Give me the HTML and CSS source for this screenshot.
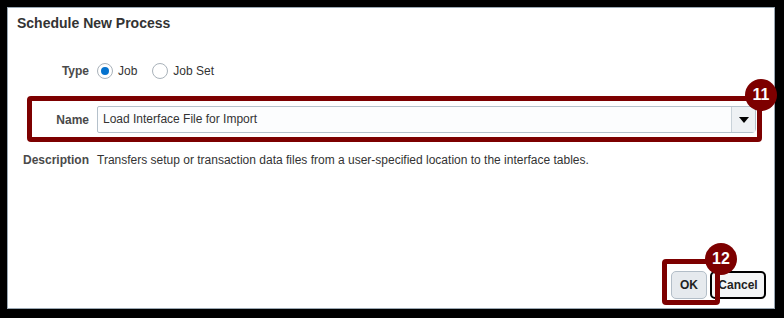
FILE: index.html
```html
<!DOCTYPE html>
<html lang="en">
<head>
  <meta charset="UTF-8">
  <title>Schedule New Process</title>
  <link rel="stylesheet" href="styles.css">
</head>
<body>
<div class="screen">
  <div class="dialog">
    <h1 class="title">Schedule New Process</h1>

    <div class="row row-type">
      <span class="label">Type</span>
      <span class="radio checked"></span><span class="radio-text">Job</span>
      <span class="radio"></span><span class="radio-text">Job Set</span>
    </div>

    <div class="row row-name">
      <span class="label">Name</span>
      <div class="select">
        <span class="select-value">Load Interface File for Import</span>
        <span class="select-btn"><span class="caret"></span></span>
      </div>
    </div>

    <div class="row row-desc">
      <span class="label">Description</span>
      <span class="desc">Transfers setup or transaction data files from a user-specified location to the interface tables.</span>
    </div>

    <div class="footer">
      <button class="btn btn-ok">OK</button>
      <button class="btn btn-cancel">Cancel</button>
    </div>
  </div>

  <!-- tutorial callouts -->
  <div class="hilite hilite-name"></div>
  <div class="badge badge-11">11</div>
  <div class="hilite hilite-ok"></div>
  <div class="badge badge-12">12</div>
</div>
</body>
</html>
```

FILE: styles.css
```css
* {
  box-sizing: border-box;
}
body {
  margin: 0;
  background: #fff;
  font-family: "Liberation Sans", Arial, sans-serif;
  color: #333;
}
.screen {
  position: relative;
  width: 784px;
  height: 318px;
  border: 7px solid #000;
  border-right-width: 9px;
  border-bottom-width: 9px;
}
.dialog {
  display: flex;
  flex-direction: column;
  height: 100%;
  border: 1px solid #9aa8b4;
  background: #fff;
}
.title {
  margin: 0;
  padding: 7px 0 0 9px;
  font-size: 14px;
  line-height: 16px;
  font-weight: bold;
  color: #333;
}
.row {
  display: flex;
  align-items: center;
  font-size: 12px;
  padding-right: 18px;
}
.label {
  width: 81px;
  margin-right: 8px;
  text-align: right;
  font-weight: bold;
  color: #4a4a4a;
  flex-shrink: 0;
}
.row-type {
  margin-top: 30px;
  height: 20px;
}
.radio {
  width: 16px;
  height: 16px;
  border: 1px solid #a9b2ba;
  border-radius: 50%;
  background: #fff;
  display: flex;
  align-items: center;
  justify-content: center;
}
.radio.checked::after {
  content: "";
  width: 8px;
  height: 8px;
  border-radius: 50%;
  background: #0572ce;
}
.radio-text {
  margin-left: 5px;
  margin-right: 15px;
}
.row-name {
  margin-top: 25px;
}
.select {
  flex: 1;
  display: flex;
  height: 27px;
  border: 1px solid #b5c1cb;
  border-radius: 2px 2px 4px 2px;
  background: #fcfdfe;
}
.select-value {
  flex: 1;
  padding-left: 5px;
  line-height: 25px;
}
.select-btn {
  width: 24px;
  border-left: 1px solid #c9d2d9;
  background: #eef1f4;
  display: flex;
  align-items: center;
  justify-content: center;
}
.caret {
  width: 0;
  height: 0;
  border-left: 5px solid transparent;
  border-right: 5px solid transparent;
  border-top: 6px solid #000;
}
.row-desc {
  margin-top: 19px;
  line-height: 16px;
}
.footer {
  margin-top: auto;
  display: flex;
  justify-content: flex-end;
  gap: 3px;
  padding: 0 8px 9px 0;
}
.btn {
  height: 28px;
  border-radius: 5px;
  font-family: "Liberation Sans", Arial, sans-serif;
  font-size: 12px;
  font-weight: bold;
  color: #222;
  padding: 0;
}
.btn-ok {
  width: 36px;
  border: 1px solid #b3bec8;
  background: #e6eaee;
}
.btn-cancel {
  width: 56px;
  border: 2px solid #000;
  background: #f4f5f6;
}
.hilite {
  position: absolute;
  border: 5px solid #7d0000;
  border-radius: 4px;
}
.hilite-name {
  left: 20px;
  top: 89px;
  width: 735px;
  height: 46px;
}
.hilite-ok {
  left: 655px;
  top: 252px;
  width: 58px;
  height: 46px;
}
.badge {
  position: absolute;
  width: 32px;
  height: 32px;
  border-radius: 50%;
  background: #7d0000;
  color: #fff;
  font-size: 16px;
  font-weight: bold;
  line-height: 32px;
  text-align: center;
}
.badge-11 {
  left: 738px;
  top: 72px;
}
.badge-12 {
  left: 698px;
  top: 236px;
}
```
